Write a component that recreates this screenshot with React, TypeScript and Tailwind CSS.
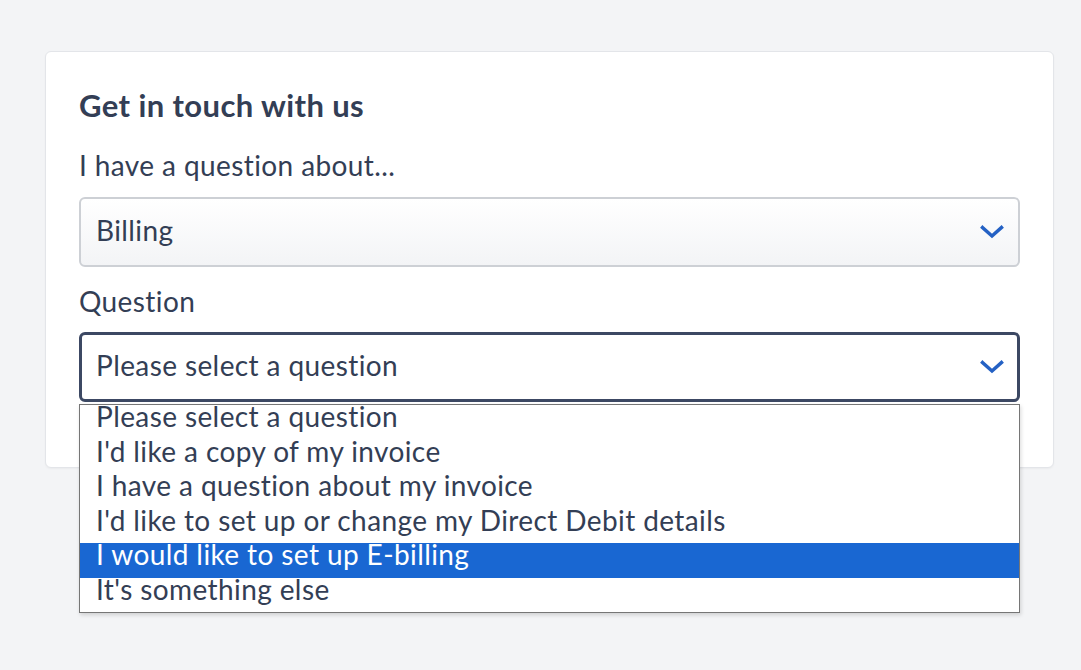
import React from "react";

const Chevron = () => (
  <svg width="24" height="14" viewBox="0 0 24 14" fill="none">
    <path d="M2.5 2.5 L12 11 L21.5 2.5" stroke="#2461c4" strokeWidth="3.4" strokeLinecap="square" strokeLinejoin="miter" />
  </svg>
);

const options = [
  "Please select a question",
  "I'd like a copy of my invoice",
  "I have a question about my invoice",
  "I'd like to set up or change my Direct Debit details",
  "I would like to set up E-billing",
  "It's something else",
];

export default function App() {
  return (
    <div className="min-h-[670px] w-full bg-[#f3f4f6] pt-[51px] text-[#333e55]" style={{ fontFamily: "Lato, 'Noto Sans', sans-serif" }}>
      <div className="ml-[45px] w-[1009px] h-[417px] rounded-[6px] border border-[#e3e5e9] bg-white px-[33px] pt-[35px] shadow-[0_1px_2px_rgba(0,0,0,0.04)]">
        <h2 className="text-[31px] font-bold leading-[36px] tracking-[0.4px]">Get in touch with us</h2>
        <div className="mt-[25px] text-[28px] leading-[34px] tracking-[0.4px]">I have a question about...</div>
        <div className="mt-[15px] flex h-[70px] items-center justify-between rounded-[6px] border-2 border-[#cdd0d5] bg-gradient-to-b from-white to-[#f3f4f6] pl-[15px] pr-[14px]">
          <span className="pb-[4px] text-[28px] tracking-[0.4px]">Billing</span>
          <Chevron />
        </div>
        <div className="mt-[17px] text-[28px] leading-[34px] tracking-[0.4px]">Question</div>
        <div className="relative mt-[14px]">
          <div className="flex h-[70px] items-center justify-between rounded-[6px] border-[3px] border-[#3c4863] bg-white pl-[14px] pr-[13px]">
            <span className="pb-[4px] text-[28px] tracking-[0.4px]">Please select a question</span>
            <Chevron />
          </div>
          <ul className="absolute left-0 top-[72px] z-10 w-[941px] border border-[#767676] bg-white shadow-[1px_2px_4px_rgba(0,0,0,0.15)]">
            {options.map((o, i) => (
              <li
                key={o}
                className={
                  i === 4
                    ? "h-[34.5px] bg-[#1967d2] pl-[16px] text-[28px] leading-[23px] tracking-[0.4px] text-white"
                    : "h-[34.5px] pl-[16px] text-[28px] leading-[23px] tracking-[0.4px] text-[#333e55]"
                }
              >
                {o}
              </li>
            ))}
          </ul>
        </div>
      </div>
    </div>
  );
}
